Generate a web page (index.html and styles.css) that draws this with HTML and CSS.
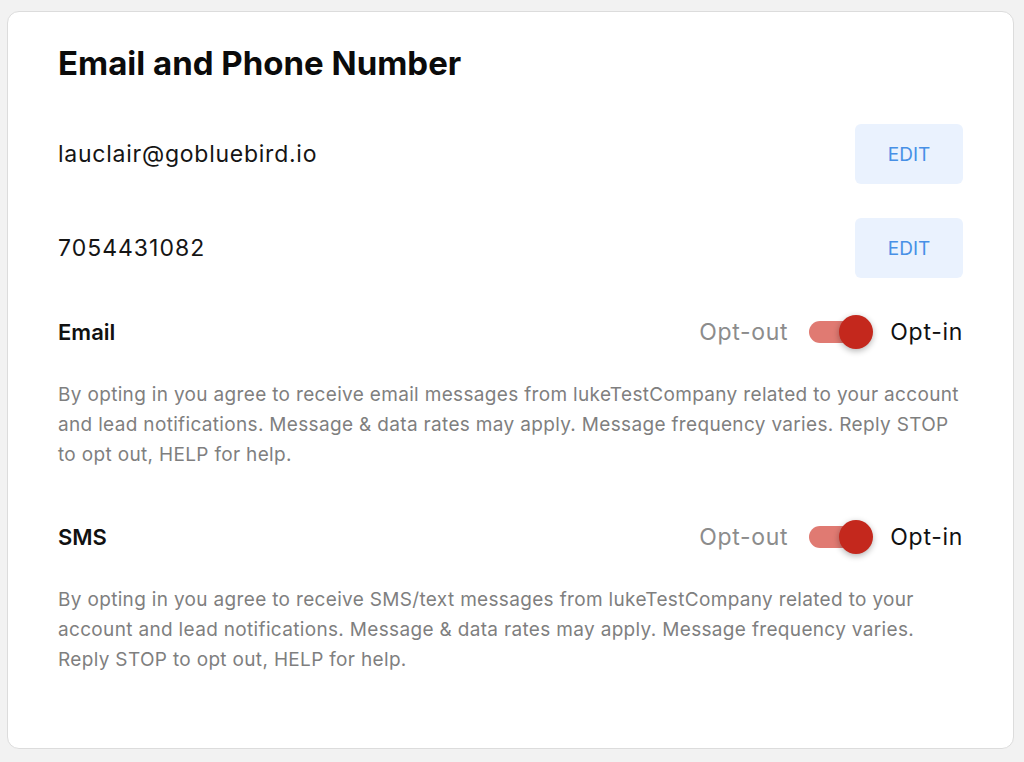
FILE: index.html
```html
<!DOCTYPE html>
<html lang="en">
<head>
    <meta charset="UTF-8">
    <meta name="viewport" content="width=device-width, initial-scale=1.0">
    <title>Email and Phone Number</title>
    <link rel="stylesheet" href="styles.css">
</head>
<body>
    <div class="card">
        <h1 class="title">Email and Phone Number</h1>

        <!-- Contact rows -->
        <div class="contact-row">
            <span class="contact-value">lauclair@gobluebird.io</span>
            <button class="edit-btn">EDIT</button>
        </div>
        <div class="contact-row">
            <span class="contact-value phone">7054431082</span>
            <button class="edit-btn">EDIT</button>
        </div>

        <!-- Email consent -->
        <div class="consent">
            <div class="consent-head">
                <span class="consent-label">Email</span>
                <div class="switch-group">
                    <span class="opt off">Opt-out</span>
                    <span class="switch on"><span class="knob"></span></span>
                    <span class="opt">Opt-in</span>
                </div>
            </div>
            <p class="consent-text">By opting in you agree to receive email messages from lukeTestCompany related to your account and lead notifications. Message &amp; data rates may apply. Message frequency varies. Reply STOP to opt out, HELP for help.</p>
        </div>

        <!-- SMS consent -->
        <div class="consent">
            <div class="consent-head">
                <span class="consent-label">SMS</span>
                <div class="switch-group">
                    <span class="opt off">Opt-out</span>
                    <span class="switch on"><span class="knob"></span></span>
                    <span class="opt">Opt-in</span>
                </div>
            </div>
            <p class="consent-text">By opting in you agree to receive SMS/text messages from lukeTestCompany related to your account and lead notifications. Message &amp; data rates may apply. Message frequency varies. Reply STOP to opt out, HELP for help.</p>
        </div>
    </div>
</body>
</html>
```

FILE: styles.css
```css
* {
    box-sizing: border-box;
}
body {
    margin: 0;
    padding: 11px 10px 0 7px;
    background: #f2f2f2;
    font-family: Inter, "Noto Sans", sans-serif;
    color: #111;
}
.card {
    height: 738px;
    background: #fff;
    border: 1px solid #dcdcdc;
    border-radius: 12px;
    padding: 32px 50px 0 50px;
}
.title {
    margin: 0 0 42px 0;
    font-size: 33px;
    line-height: 38px;
    font-weight: 700;
    letter-spacing: 0;
    color: #0b0b0b;
}
.contact-row {
    display: flex;
    align-items: center;
    justify-content: space-between;
    height: 60px;
    margin-bottom: 34px;
}
.contact-value {
    font-size: 23px;
    letter-spacing: 0.75px;
    color: #151515;
}
.contact-value.phone {
    letter-spacing: 1px;
}
.edit-btn {
    width: 108px;
    height: 60px;
    border: none;
    border-radius: 6px;
    background: #eaf2fe;
    color: #4790e6;
    font-family: inherit;
    font-size: 19px;
    cursor: pointer;
}
.consent {
    padding-top: 2px;
    margin-bottom: 47px;
}
.consent-head {
    display: flex;
    align-items: center;
    justify-content: space-between;
    height: 36px;
}
.consent-label {
    font-size: 22px;
    font-weight: 600;
    color: #111;
}
.switch-group {
    display: flex;
    align-items: center;
}
.opt {
    font-size: 23px;
    letter-spacing: 0.7px;
    color: #111;
}
.opt.off {
    color: #8c8c8c;
}
.switch {
    position: relative;
    width: 57px;
    height: 22px;
    margin: 0 24px 0 21px;
    border-radius: 11px;
    background: #e07a72;
}
.switch .knob {
    position: absolute;
    top: -6px;
    right: -7px;
    width: 34px;
    height: 34px;
    border-radius: 50%;
    background: #c4281d;
    box-shadow: 0 2px 6px rgba(0, 0, 0, 0.3);
}
.consent-text {
    margin: 30px 0 0 0;
    font-size: 19px;
    line-height: 30px;
    letter-spacing: 0.33px;
    color: #7f7f7f;
}
```
